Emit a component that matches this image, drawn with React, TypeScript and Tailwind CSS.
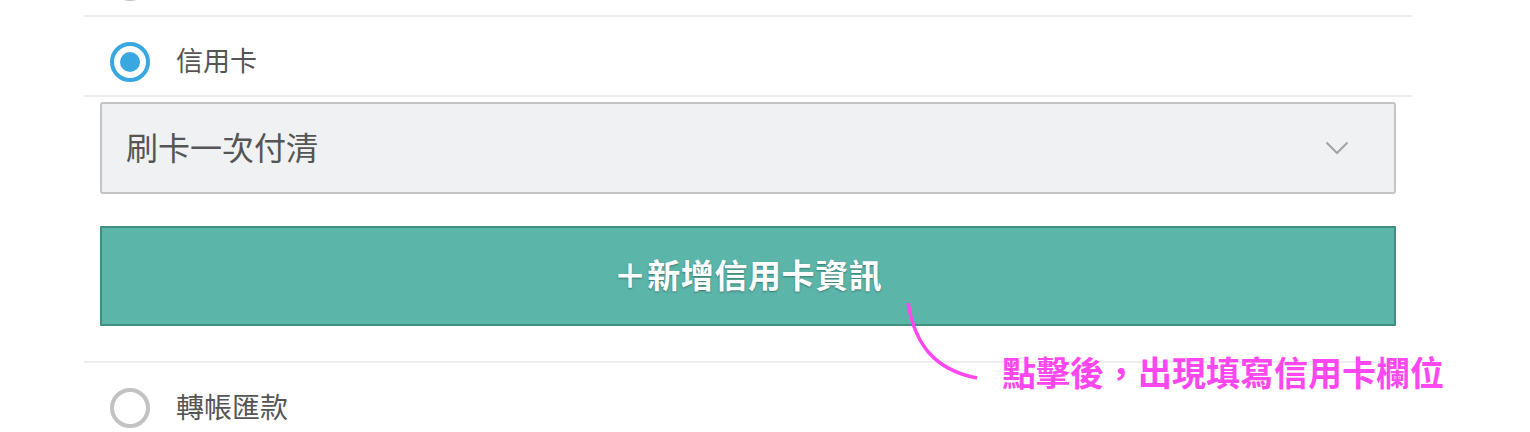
export default function App() {
  return (
    <div className="relative h-[432px] w-full overflow-hidden bg-white font-['Noto_Sans_CJK_TC',sans-serif] text-[#555]">
      <div className="ml-[84px] w-[1328px]">
        {/* previous option, cut off at top */}
        <div className="h-[17px] overflow-hidden border-b-2 border-[#ededed] pl-[26px]">
          <div className="-mt-[39px] h-10 w-10 rounded-full border-4 border-[#c2c2c2]" />
        </div>

        {/* credit card option */}
        <div className="flex items-center gap-[26px] border-b-2 border-[#ededed] pb-[13px] pl-[26px] pt-[25px]">
          <div className="flex h-10 w-10 items-center justify-center rounded-full border-4 border-[#3aa8e0]">
            <div className="h-5 w-5 rounded-full bg-[#3aa8e0]" />
          </div>
          <span className="pb-[5px] text-[27px] leading-none">信用卡</span>
        </div>

        <div className="mx-4 mt-[5px] flex h-[92px] items-center justify-between rounded-[3px] border-2 border-[#c4c4c4] bg-[#f0f1f2] pl-6 pr-[45px]">
          <span className="pb-[4px] text-[32px] leading-none">刷卡一次付清</span>
          <svg width="24" height="14" viewBox="0 0 24 14" fill="none">
            <path d="M1.5 1.5 L12 12 L22.5 1.5" stroke="#a3a3a3" strokeWidth="2" />
          </svg>
        </div>

        <button className="mx-4 mt-8 flex h-[100px] w-[1296px] items-center justify-center border-2 border-[#40907f] bg-[#5bb5a8] pb-[4px] text-[33px] font-bold leading-none tracking-[0.6px] text-white [text-shadow:0_1px_2px_rgba(0,0,0,0.35)]">
          ＋新增信用卡資訊
        </button>

        {/* bank transfer option */}
        <div className="mt-[35px] flex items-center gap-[26px] border-t-2 border-[#ededed] pl-[26px] pt-[25px]">
          <div className="h-10 w-10 rounded-full border-4 border-[#c2c2c2]" />
          <span className="pb-[4px] text-[28px] leading-none">轉帳匯款</span>
        </div>
      </div>

      {/* annotation overlay */}
      <svg className="absolute left-0 top-0" width="1530" height="432" fill="none">
        <path d="M908 303 C915 345 935 370 977 378" stroke="#ff47ef" strokeWidth="3.5" />
      </svg>
      <div className="absolute left-[1002px] top-[355px] text-[34px] font-bold leading-none text-[#ff47ef]">
        點擊後，出現填寫信用卡欄位
      </div>
    </div>
  );
}
